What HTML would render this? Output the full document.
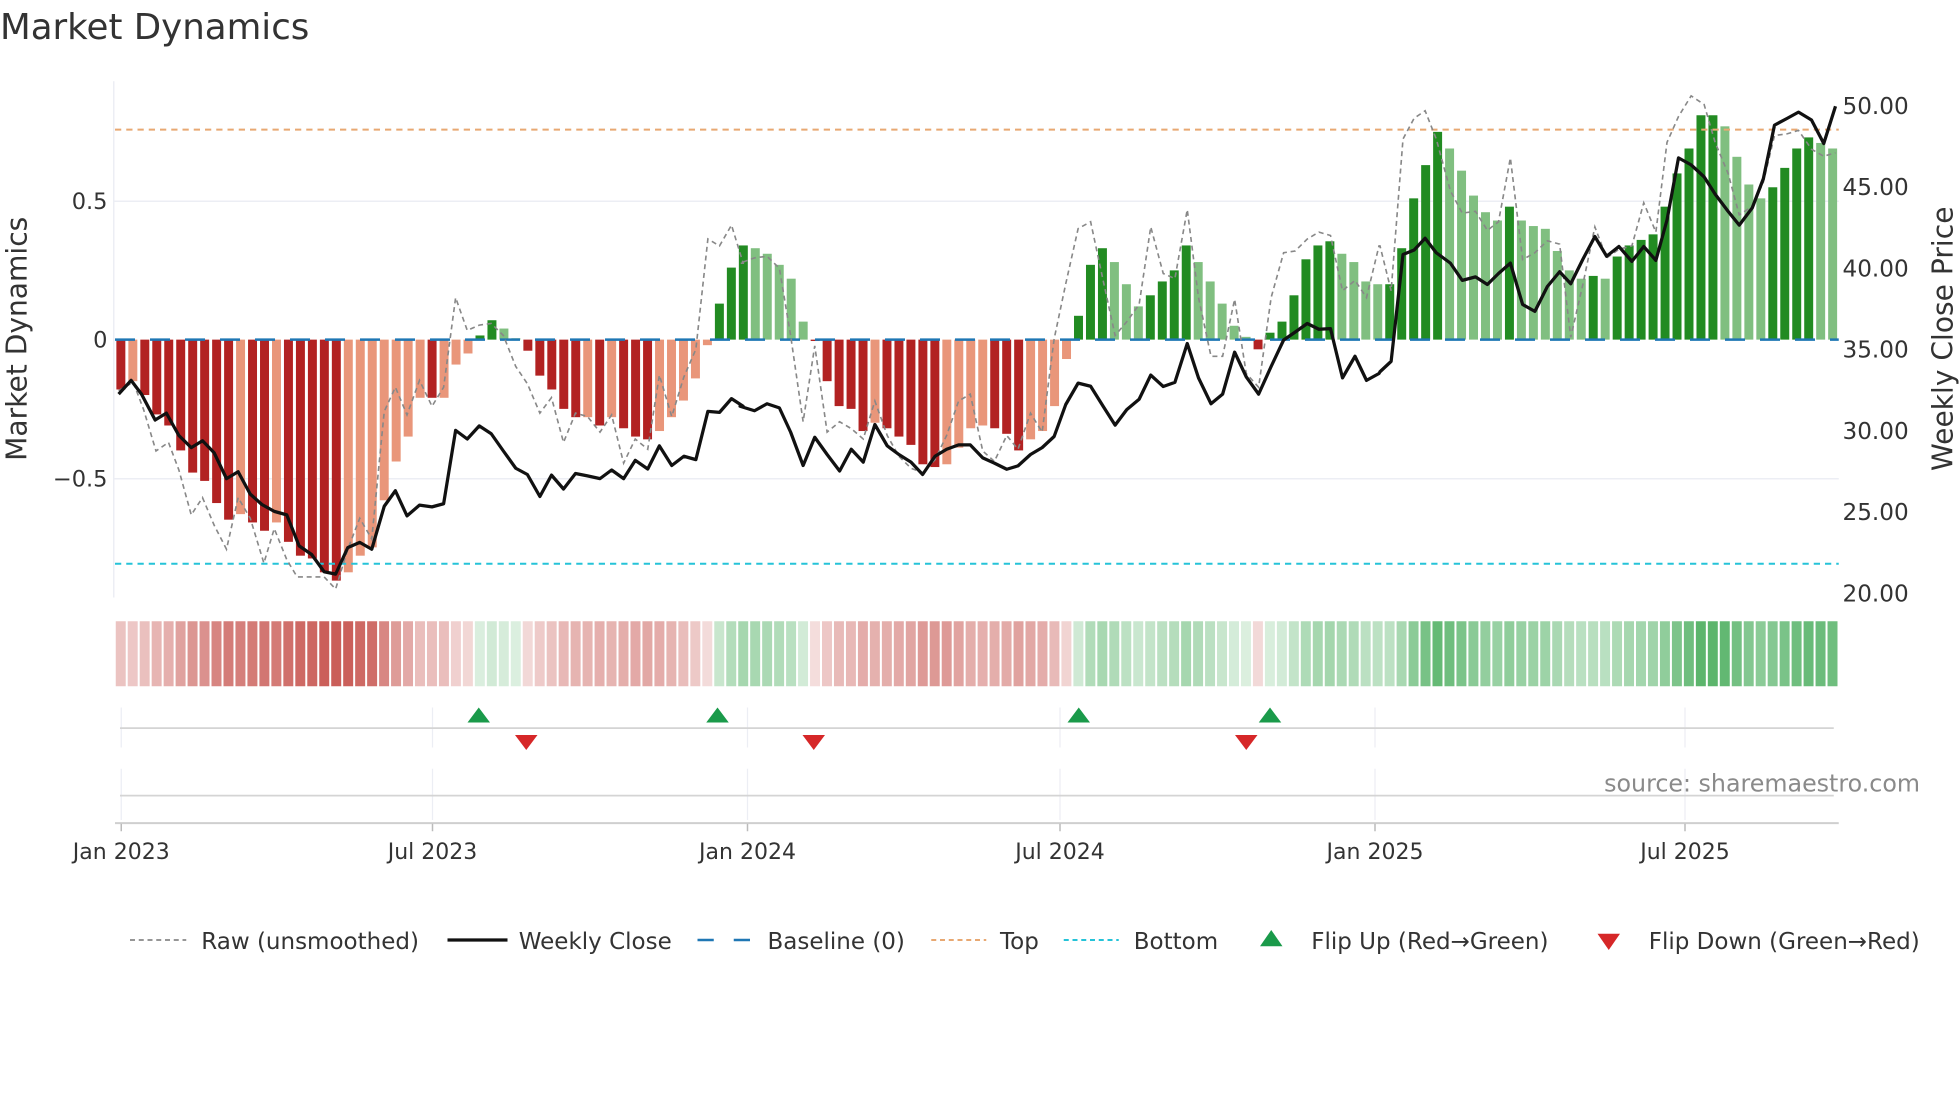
<!DOCTYPE html>
<html><head><meta charset="utf-8"><style>
html,body{margin:0;padding:0;background:#fff;width:1960px;height:1102px;overflow:hidden}
svg text{font-family:"DejaVu Sans","Liberation Sans",sans-serif;fill:#333}
</style></head><body>
<svg id="s" width="1960" height="1102" viewBox="0 0 1568 881.6" xmlns="http://www.w3.org/2000/svg">
<rect width="1568" height="882" fill="#fff"/>
<text x="0" y="31" font-size="28.5" fill="#333">Market Dynamics</text>
<line x1="91" y1="161" x2="1471" y2="161" stroke="#eceef4" stroke-width="1.2"/>
<line x1="91" y1="383" x2="1471" y2="383" stroke="#eceef4" stroke-width="1.2"/>
<line x1="91" y1="65" x2="91" y2="478" stroke="#eceef4" stroke-width="1.2"/>
<g id="bars"></g>
<line x1="92" y1="271.7" x2="1471" y2="271.7" stroke="#1f77b4" stroke-width="2" stroke-dasharray="16,12"/>
<line x1="92" y1="103.7" x2="1471" y2="103.7" stroke="#e8a872" stroke-width="1.6" stroke-dasharray="5,4"/>
<line x1="92" y1="451" x2="1471" y2="451" stroke="#25c3d8" stroke-width="1.6" stroke-dasharray="5,4"/>
<polyline id="raw" fill="none" stroke="#888" stroke-width="1.3" stroke-dasharray="4,3"/>
<polyline id="px" fill="none" stroke="#111" stroke-width="2.6" stroke-linejoin="round"/>
<g font-size="18" text-anchor="end">
<text x="86" y="167">0.5</text><text x="86" y="278">0</text><text x="86" y="389">−0.5</text>
</g>
<text transform="translate(21,271) rotate(-90)" font-size="22.5" text-anchor="middle">Market Dynamics</text>
<g font-size="18.5">
<text x="1474" y="91">50.00</text><text x="1474" y="156">45.00</text><text x="1474" y="221">40.00</text>
<text x="1474" y="286">35.00</text><text x="1474" y="351">30.00</text><text x="1474" y="416">25.00</text><text x="1474" y="481">20.00</text>
</g>
<text transform="translate(1562,271) rotate(-90)" font-size="22.5" text-anchor="middle">Weekly Close Price</text>
<g id="strip"></g>
<g stroke="#eceef4" stroke-width="1">
<line x1="97" y1="566" x2="97" y2="598"/><line x1="346" y1="566" x2="346" y2="598"/><line x1="598" y1="566" x2="598" y2="598"/>
<line x1="848" y1="566" x2="848" y2="598"/><line x1="1100" y1="566" x2="1100" y2="598"/><line x1="1348" y1="566" x2="1348" y2="598"/>
<line x1="97" y1="615" x2="97" y2="656"/><line x1="346" y1="615" x2="346" y2="656"/><line x1="598" y1="615" x2="598" y2="656"/>
<line x1="848" y1="615" x2="848" y2="656"/><line x1="1100" y1="615" x2="1100" y2="656"/><line x1="1348" y1="615" x2="1348" y2="656"/>
</g>
<line x1="96" y1="582.5" x2="1467" y2="582.5" stroke="#d4d4d4" stroke-width="1.4"/>
<line x1="96" y1="636.5" x2="1467" y2="636.5" stroke="#d4d4d4" stroke-width="1.4"/>
<line x1="92" y1="658.5" x2="1471" y2="658.5" stroke="#cfcfcf" stroke-width="1.6"/>
<g stroke="#bbb" stroke-width="1.2">
<line x1="97" y1="659" x2="97" y2="665"/><line x1="346" y1="659" x2="346" y2="665"/><line x1="598" y1="659" x2="598" y2="665"/>
<line x1="848" y1="659" x2="848" y2="665"/><line x1="1100" y1="659" x2="1100" y2="665"/><line x1="1348" y1="659" x2="1348" y2="665"/>
</g>
<g fill="#1a9a4a">
<polygon points="374,578 392,578 383,566"/><polygon points="565,578 583,578 574,566"/>
<polygon points="854,578 872,578 863,566"/><polygon points="1007,578 1025,578 1016,566"/>
</g>
<g fill="#d62728">
<polygon points="412,588 430,588 421,600"/><polygon points="642,588 660,588 651,600"/><polygon points="988,588 1006,588 997,600"/>
</g>
<text x="1536" y="633" font-size="19" text-anchor="end" style="fill:#8a8a8a">source: sharemaestro.com</text>
<g font-size="17.6" text-anchor="middle">
<text x="97" y="687">Jan 2023</text><text x="346" y="687">Jul 2023</text><text x="598" y="687">Jan 2024</text>
<text x="848" y="687">Jul 2024</text><text x="1100" y="687">Jan 2025</text><text x="1348" y="687">Jul 2025</text>
</g>
<line x1="104" y1="752" x2="149" y2="752" stroke="#888" stroke-width="1.4" stroke-dasharray="4,3"/>
<line x1="358" y1="752" x2="406" y2="752" stroke="#111" stroke-width="2.6"/>
<line x1="558" y1="752" x2="603" y2="752" stroke="#1f77b4" stroke-width="2" stroke-dasharray="13,16"/>
<line x1="745" y1="752" x2="789" y2="752" stroke="#e8a872" stroke-width="1.6" stroke-dasharray="4,3"/>
<line x1="851" y1="752" x2="895" y2="752" stroke="#25c3d8" stroke-width="1.6" stroke-dasharray="4,3"/>
<polygon points="1008,757 1026,757 1017,744" fill="#1a9a4a"/>
<polygon points="1278,747 1296,747 1287,760" fill="#d62728"/>
<g font-size="18.4">
<text x="161" y="759">Raw (unsmoothed)</text><text x="415" y="759">Weekly Close</text><text x="614" y="759">Baseline (0)</text>
<text x="800" y="759">Top</text><text x="907" y="759">Bottom</text><text x="1049" y="759">Flip Up (Red→Green)</text><text x="1319" y="759">Flip Down (Green→Red)</text>
</g>
</svg>
<script>
var B=[[-.18,1],[-.15,0],[-.2,1],[-.27,1],[-.31,1],[-.4,1],[-.48,1],[-.51,1],[-.59,1],[-.65,1],[-.63,0],[-.66,1],[-.69,1],[-.66,0],[-.73,1],[-.78,1],[-.79,1],[-.84,1],[-.87,1],[-.84,0],[-.78,0],[-.75,0],[-.58,0],[-.44,0],[-.35,0],[-.21,0],[-.21,1],[-.21,0],[-.09,0],[-.05,0],
[.015,1],[.07,1],[.04,0],[.005,0],[-.04,1],[-.13,1],[-.18,1],[-.25,1],[-.28,1],[-.28,0],[-.31,1],[-.28,0],[-.32,1],[-.35,1],[-.36,1],[-.33,0],[-.28,0],[-.22,0],[-.14,0],[-.02,0],
[.13,1],[.26,1],[.34,1],[.33,0],[.31,0],[.27,0],[.22,0],[.065,0],[-.005,1],[-.15,1],[-.24,1],[-.25,1],[-.33,1],[-.3,0],[-.32,1],[-.35,1],[-.38,1],[-.45,1],[-.46,1],[-.45,0],[-.39,0],[-.32,0],[-.31,0],[-.32,1],[-.34,1],[-.4,1],[-.36,0],[-.33,0],[-.24,0],[-.07,0],
[.086,1],[.27,1],[.33,1],[.28,0],[.2,0],[.12,0],[.16,1],[.21,1],[.25,1],[.34,1],[.28,0],[.21,0],[.13,0],[.05,0],[.01,0],[-.035,1],[.025,1],[.065,1],[.16,1],[.29,1],[.34,1],[.355,1],[.31,0],[.28,0],[.21,0],[.2,0],[.2,1],
[.33,1],[.51,1],[.63,1],[.75,1],[.69,0],[.61,0],[.52,0],[.46,0],[.43,0],[.48,1],[.43,0],[.41,0],[.4,0],[.32,0],[.25,0],[.22,0],[.23,1],[.22,0],[.3,1],[.34,1],[.36,1],[.38,1],[.48,1],[.6,1],[.69,1],[.81,1],[.81,1],[.77,0],[.66,0],[.56,0],[.51,0],[.55,1],[.62,1],[.69,1],[.73,1],[.71,0],[.69,0]];
var N=B.length,P=1379/N,Z=271.7,U=221.6,ns="http://www.w3.org/2000/svg";
var gb=document.getElementById('bars'),gs=document.getElementById('strip');
function mk(p,t,a){var e=document.createElementNS(ns,t);for(var k in a)e.setAttribute(k,a[k]);p.appendChild(e);}
B.forEach(function(b,i){var v=b[0],x=92+i*P+1.1,w=P-2.4,h=Math.abs(v)*U;
 var c=v<0?(b[1]?'#b22222':'#e9967a'):(b[1]?'#228b22':'#80bf80');
 mk(gb,'rect',{x:x,y:v<0?Z:Z-h,width:w,height:Math.max(h,1),fill:c});
 var t=0.18+0.7*Math.min(Math.abs(v)/0.85,1),base=v<0?[195,72,66]:[62,168,82];
 var col='rgb('+base.map(function(q){return Math.round(255+(q-255)*t)}).join(',')+')';
 mk(gs,'rect',{x:92+i*P+0.6,y:497,width:P-1.6,height:52,fill:col});});
function cv(arr,x0,kx){return arr.map(function(p){return ((x0+p[0]/kx)/1.25).toFixed(1)+','+((70+p[1]/2.9)/1.25).toFixed(1)}).join(' ');}
var L1=[[45,940],[75,900],[100,940],[133,1015],[160,995],[190,1060],[220,1095],[247,1075],[275,1110],[305,1185],[333,1165],[362,1230],[390,1260],[420,1280],[450,1290],[480,1380],[510,1405],[540,1455],[568,1462],[597,1385],[626,1370],[655,1390],[685,1265],[712,1220],[740,1293],[770,1262],[800,1267],[828,1258],[857,1045],[885,1070],[914,1032],[943,1055],[972,1105],[1002,1155],[1030,1173],[1060,1237],[1088,1175],[1117,1215],[1146,1170],[1175,1177],[1205,1185],[1233,1160],[1262,1185],[1290,1132],[1320,1157],[1348,1090],[1378,1147],[1407,1120],[1436,1130],[1465,990],[1493,993],[1522,953],[1550,975]];
var L2=[[0,975],[35,988],[65,968],[95,980],[122,1050],[152,1147],[180,1065],[210,1115],[240,1163],[268,1100],[297,1137],[325,1028],[355,1090],[383,1115],[412,1137],[440,1173],[470,1120],[498,1100],[527,1087],[555,1087],[585,1125],[613,1140],[643,1158],[670,1148],[700,1115],[728,1095],[757,1063],[785,970],[815,908],[845,917],[875,975],[904,1030],[932,985],[962,955],[990,885],[1020,918],[1048,906],[1078,793],[1105,893],[1135,968],[1163,940],[1192,818],[1220,890],[1250,940],[1280,860],[1310,783],[1338,760],[1367,735],[1395,752],[1423,750],[1452,893],[1482,830],[1510,900],[1540,880]];
var L3=[[0,875],[30,845],[62,535],[92,522],[122,488],[152,530],[190,560],[222,610],[258,600],[290,622],[320,590],[352,560],[385,680],[418,700],[452,628],[485,585],[515,620],[548,548],[580,483],[612,540],[645,512],[680,555],[712,512],[745,552],[775,435],[806,255],[840,275],[875,310],[905,360],[940,410],[970,450],[1005,400],[1035,315],[1065,160],[1100,140],[1130,122],[1165,145],[1198,213],[1230,105]];
var R1=[[45,930],[80,905],[105,985],[135,1105],[165,1080],[190,1160],[220,1290],[247,1240],[275,1320],[305,1390],[333,1240],[362,1300],[395,1430],[420,1330],[450,1420],[475,1470],[510,1470],[540,1470],[568,1505],[597,1390],[626,1300],[655,1360],[685,990],[712,920],[740,1000],[770,900],[800,975],[828,920],[857,660],[885,755],[914,740],[943,735],[972,770],[1002,860],[1030,910],[1060,995],[1088,950],[1117,1080],[1146,995],[1175,1005],[1205,1050],[1233,1000],[1262,1140],[1290,1070],[1320,1100],[1348,885],[1378,1005],[1407,890],[1436,810],[1465,490],[1493,510],[1522,450],[1550,560]];
var R2=[[0,560],[35,545],[65,540],[95,575],[122,770],[152,1020],[180,800],[210,1050],[240,1020],[268,1040],[297,1070],[325,960],[355,1060],[383,1120],[412,1155],[440,1168],[470,1130],[498,1060],[527,960],[555,940],[585,1105],[613,1135],[643,1060],[670,1100],[700,995],[728,1050],[757,780],[785,620],[815,460],[845,440],[875,610],[904,770],[932,730],[962,680],[990,455],[1020,590],[1048,605],[1078,405],[1105,660],[1135,830],[1163,830],[1192,665],[1220,880],[1250,920],[1280,660],[1310,530],[1338,525],[1367,490],[1395,470],[1423,480],[1452,640],[1482,610],[1510,660],[1540,510]];
var R3=[[0,510],[30,640],[62,200],[92,140],[122,118],[152,200],[190,350],[222,415],[258,410],[290,465],[320,440],[352,255],[385,550],[418,530],[452,495],[485,505],[515,775],[548,620],[580,455],[612,545],[645,520],[680,510],[712,385],[745,470],[775,210],[806,135],[840,75],[875,100],[905,210],[940,300],[970,420],[1005,395],[1035,325],[1065,190],[1100,185],[1130,175],[1165,230],[1198,250],[1230,240]];
document.getElementById('px').setAttribute('points',cv(L1,100,2.41)+' '+cv(L2,740,2.41)+' '+cv(L3,1380,2.70));
document.getElementById('raw').setAttribute('points',cv(R1,100,2.41)+' '+cv(R2,740,2.41)+' '+cv(R3,1380,2.70));
</script>
</body></html>
